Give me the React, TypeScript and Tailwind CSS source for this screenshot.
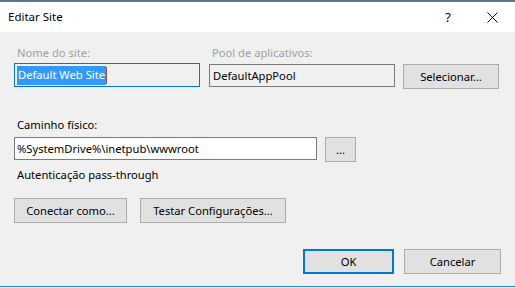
import React from "react";

const font = { fontFamily: '"Segoe UI", "Noto Sans", "Liberation Sans", sans-serif' };

function Btn({ label, className = "" }: { label: string; className?: string }) {
  return (
    <button
      className={`flex items-center justify-center bg-[#e1e1e1] border border-[#adadad] text-[11.2px] text-black h-[25px] ${className}`}
    >
      {label}
    </button>
  );
}

export default function App() {
  return (
    <div
      className="w-[515px] h-[288px] flex flex-col bg-[#f0f0f0] text-[11.2px] leading-[16px] text-black overflow-hidden"
      style={font}
    >
      {/* top edge */}
      <div className="h-px bg-[#5a6f88]" />
      <div className="h-px bg-[#2b88d8]" />

      {/* Title bar */}
      <div className="h-[30px] bg-white flex items-center pl-[8px]">
        <span className="text-[11.5px]">Editar Site</span>
        <div className="ml-auto flex items-center">
          <span className="text-[13px] w-[10px] text-center mr-[34px]">?</span>
          <svg width="11" height="11" viewBox="0 0 11 11" className="mr-[17px]">
            <path d="M0.5 0.5 L10.5 10.5 M10.5 0.5 L0.5 10.5" stroke="#000" strokeWidth="1" />
          </svg>
        </div>
      </div>

      {/* Body */}
      <div className="flex-1 flex flex-col pl-[14px] pt-[13px]">
        <div className="flex">
          <div className="w-[186px] flex flex-col">
            <span className="pl-[3px] text-[#a0a0a0]">Nome do site:</span>
            <div className="mt-[2px] h-[24px] border border-[#0078d7] bg-[#f0f0f0] flex items-center pl-[2px]">
              <span className="bg-[#3399ff] text-white h-[19px] flex items-center pl-px pr-[1px]">
                Default Web Site
              </span>
              <span className="w-px h-[17px] bg-[#a0522d]" />
            </div>
          </div>
          <div className="w-[186px] ml-[9px] flex flex-col">
            <span className="pl-[3px] text-[#a0a0a0]">Pool de aplicativos:</span>
            <div className="mt-[3px] h-[23px] border border-[#7a7a7a] bg-[#f0f0f0] flex items-center pl-[3px]">
              DefaultAppPool
            </div>
          </div>
          <Btn label="Selecionar..." className="w-[96px] ml-[8px] mt-[19px]" />
        </div>

        <span className="mt-[28px] pl-[3px]">Caminho físico:</span>
        <div className="flex mt-[4px]">
          <div className="w-[303px] h-[23px] border border-[#7a7a7a] bg-white flex items-center pl-[2px]">
            %SystemDrive%\inetpub\wwwroot
          </div>
          <Btn label="..." className="w-[31px] h-[24px] ml-[8px] leading-[10px]" />
        </div>
        <span className="mt-[5px] pl-[3px]">Autenticação pass-through</span>

        <div className="flex mt-[15px]">
          <Btn label="Conectar como..." className="w-[113px]" />
          <Btn label="Testar Configurações..." className="w-[146px] ml-[13px]" />
        </div>

        <div className="flex mt-[26px] ml-[289px]">
          <button className="flex items-center justify-center bg-[#e1e1e1] border-2 border-[#0078d7] text-[11.2px] w-[91px] h-[25px]">
            OK
          </button>
          <Btn label="Cancelar" className="w-[97px] ml-[10px]" />
        </div>
      </div>

      {/* bottom edge */}
      <div className="h-px bg-[#2b88d8]" />
      <div className="h-px bg-[#f0f0f0]" />
    </div>
  );
}
